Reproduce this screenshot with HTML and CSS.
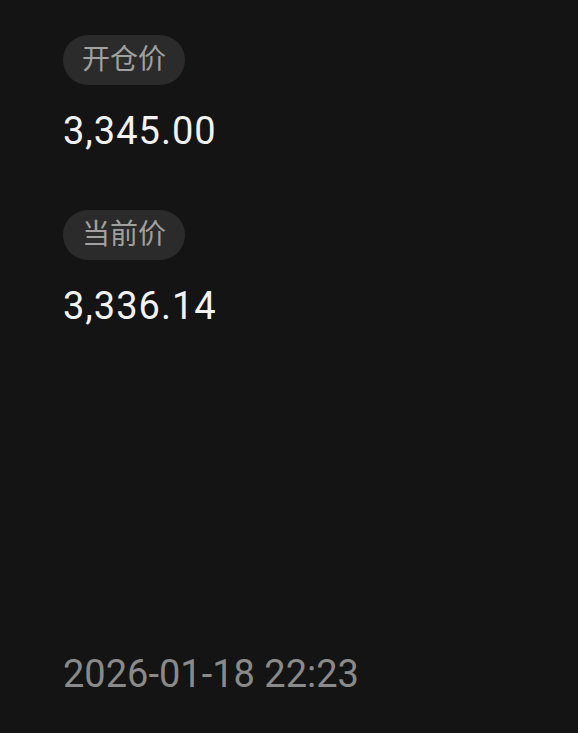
FILE: index.html
```html
<!DOCTYPE html>
<html>
<head>
	<meta charset="utf-8">
	<title>持仓详情</title>
	<link rel="stylesheet" href="styles.css">
</head>
<body>
	<div class="card">
		<div class="field">
			<span class="tag">开仓价</span>
			<div class="price">3,345.00</div>
		</div>
		<div class="field">
			<span class="tag">当前价</span>
			<div class="price">3,336.14</div>
		</div>
		<div class="time">2026-01-18 22:23</div>
	</div>
</body>
</html>
```

FILE: styles.css
```css
body {
	background-color: #141414;
	font-family: Roboto, "Noto Sans CJK SC", sans-serif;
	margin: 0;
	padding: 0;
}
.card {
	display: flex;
	flex-direction: column;
	height: 733px;
	box-sizing: border-box;
	padding: 35px 20px 37px 63px;
}
.field {
	display: flex;
	flex-direction: column;
	align-items: flex-start;
	margin-bottom: 57px;
}
.tag {
	background-color: #2b2b2b;
	border-radius: 25px;
	color: #a0a0a0;
	font-size: 28px;
	line-height: 50px;
	height: 50px;
	padding: 0 19px;
}
.price {
	color: #f2f2f2;
	font-size: 38px;
	letter-spacing: 1px;
	line-height: 44px;
	margin-top: 24px;
}
.time {
	margin-top: auto;
	color: #8a8a8a;
	font-size: 38px;
	line-height: 44px;
}
```
